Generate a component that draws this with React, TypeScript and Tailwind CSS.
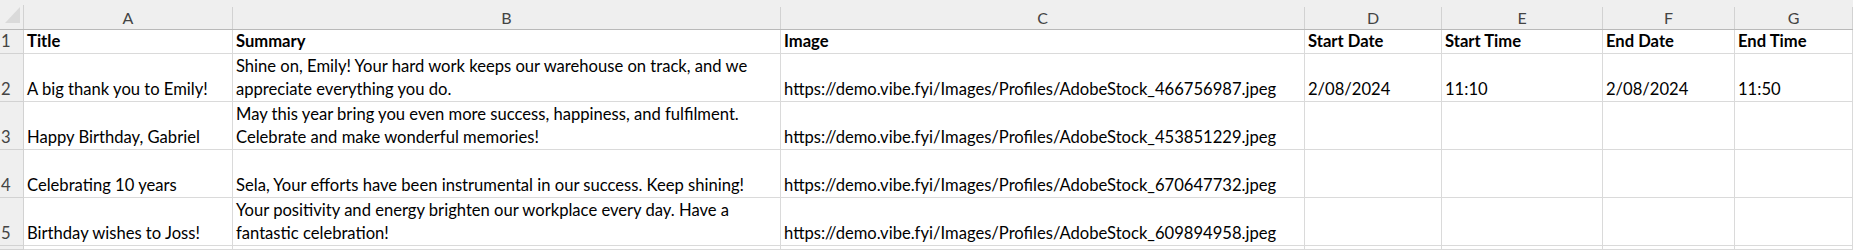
const cols = ['A', 'B', 'C', 'D', 'E', 'F', 'G']

type Row = {
  n: number | null
  cells: string[][]
  bold?: boolean
}

const url = 'https://demo.vibe.fyi/Images/Profiles/AdobeStock_'

const rows: Row[] = [
  {
    n: 1,
    bold: true,
    cells: [['Title'], ['Summary'], ['Image'], ['Start Date'], ['Start Time'], ['End Date'], ['End Time']],
  },
  {
    n: 2,
    cells: [
      ['A big thank you to Emily!'],
      ['Shine on, Emily! Your hard work keeps our warehouse on track, and we', 'appreciate everything you do.'],
      [url + '466756987.jpeg'],
      ['2/08/2024'],
      ['11:10'],
      ['2/08/2024'],
      ['11:50'],
    ],
  },
  {
    n: 3,
    cells: [
      ['Happy Birthday, Gabriel'],
      ['May this year bring you even more success, happiness, and fulfilment.', 'Celebrate and make wonderful memories!'],
      [url + '453851229.jpeg'],
      [], [], [], [],
    ],
  },
  {
    n: 4,
    cells: [
      ['Celebrating 10 years'],
      ['Sela, Your efforts have been instrumental in our success. Keep shining!'],
      [url + '670647732.jpeg'],
      [], [], [], [],
    ],
  },
  {
    n: 5,
    cells: [
      ['Birthday wishes to Joss!'],
      ['Your positivity and energy brighten our workplace every day. Have a', 'fantastic celebration!'],
      [url + '609894958.jpeg'],
      [], [], [], [],
    ],
  },
  // only the top few pixels of row 6 show in the frame
  { n: null, cells: [[], [], [], [], [], [], []] },
]

function Corner() {
  return (
    <div className="flex items-end bg-[#efefef] border-b border-[#b9b9b9]">
      <div className="relative h-[24px] w-full border-r border-[#d2d2d2]">
        <svg className="absolute left-[5px] top-[2px]" width="15" height="16" viewBox="0 0 15 16">
          <polygon points="15,0 15,16 0,16" fill="#dadada" />
        </svg>
      </div>
    </div>
  )
}

export default function App() {
  return (
    <div
      className="grid grid-cols-[24px_209px_548px_524px_137px_161px_132px_118px] grid-rows-[30px_24px_48px_48px_48px_48px_4px] bg-white text-black overflow-hidden"
      style={{ fontFamily: 'Lato, "Liberation Sans", sans-serif' }}
    >
      {/* Column letters */}
      <Corner />
      {cols.map((c) => (
        <div key={c} className="flex items-end bg-[#efefef] border-b border-[#b9b9b9]">
          <div className="flex h-[22px] w-full items-center justify-center border-r border-[#d2d2d2] text-[16px] text-[#444444]">
            {c}
          </div>
        </div>
      ))}

      {rows.map((r, ri) => (
        <div key={ri} className="contents">
          <div className="flex flex-col justify-end bg-[#efefef] border-r border-b border-[#d2d2d2] pl-[1px] text-[16.6px] leading-[23px] text-[#444444]">
            {r.n}
          </div>
          {r.cells.map((lines, i) => (
            <div
              key={i}
              className={`flex flex-col justify-end border-r border-b border-[#dadada] pl-[3px] text-[16.6px] leading-[23px] whitespace-nowrap ${r.bold ? 'font-bold' : ''}`}
            >
              {lines.map((l) => (
                <div key={l}>{l}</div>
              ))}
            </div>
          ))}
        </div>
      ))}
    </div>
  )
}
